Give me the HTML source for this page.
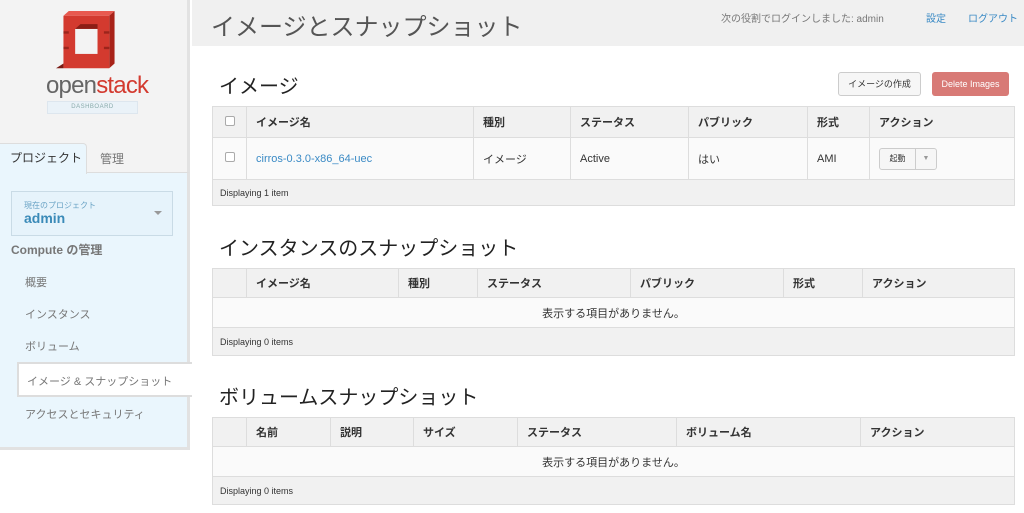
<!DOCTYPE html>
<html><head><meta charset="utf-8"><style>
*{margin:0;padding:0;box-sizing:border-box}
body{width:1024px;height:513px;overflow:hidden;background:#fff;font-family:"Liberation Sans","Noto Sans CJK JP",sans-serif;color:#333;position:relative}
.a{position:absolute}
.sidetop{left:0;top:0;width:190px;height:450px;background:#f3f3f3;border-right:3px solid #e2e2e2}
.nav{left:0;top:172px;width:190px;height:278px;background:#eaf6fd;border-top:1px solid #ddd;border-right:3px solid #e2e2e2;border-bottom:3px solid #e2e2e2}
.hdr{left:192px;top:0;width:832px;height:46px;background:#f0f0f0}
table{position:absolute;left:212px;width:803px;border-collapse:collapse;font-size:11px;border:1px solid #ddd}
th{background:#f1f1f1;text-align:left;font-weight:bold;padding-left:9px;border-right:1px solid #ddd;border-bottom:1px solid #ddd}
td{padding-left:9px;border-right:1px solid #ddd;border-bottom:1px solid #ddd;background:#fafafa}
td.f{background:#f1f1f1;font-size:9px;padding-left:7px}
td.e{text-align:center;padding:0}
h2{position:absolute;left:219px;font-size:20px;font-weight:normal;color:#222}
.cb{display:inline-block;width:10px;height:10px;border:1px solid #aaa;border-radius:2px;background:#fff;margin-left:4px}
.btn{position:absolute;font-size:9px;text-align:center;border-radius:3px}
</style></head><body>
<div class="a sidetop"></div>
<div class="a hdr"></div>
<svg class="a" style="left:56px;top:11px" width="66" height="62" viewBox="0 0 62 52" preserveAspectRatio="none">
<path d="M7 4 L12 0 L55 0 L50 4 Z" fill="#e8594f"/>
<path d="M50 4 L55 0 L55 44 L50 48 Z" fill="#a82218"/>
<path d="M7 4 H50 V48 H7 Z" fill="#d33a2f"/>
<path d="M0 48 L7 44 L7 48 Z" fill="#7a1a13"/>
<rect x="18" y="15" width="21" height="21" fill="#f3f3f3"/>
<path d="M18 15 L23 11 L39 11 L39 15 Z" fill="#8b1e16"/>
<rect x="7" y="17" width="5" height="2" fill="#9c241b"/><rect x="7" y="30" width="5" height="2" fill="#9c241b"/>
<rect x="45" y="17" width="5" height="2" fill="#9c241b"/><rect x="45" y="30" width="5" height="2" fill="#9c241b"/>
</svg>
<div class="a" style="left:46px;top:72px;font-size:24px;letter-spacing:-0.8px;color:#666">open<span style="color:#d33a2f">stack</span></div>
<div class="a" style="left:47px;top:101px;width:91px;height:13px;background:#eaf2f8;border:1px solid #dde6ee;font-size:6px;color:#8aa;text-align:center;line-height:11px;letter-spacing:0.5px">DASHBOARD</div>
<div class="a nav"></div>
<div class="a" style="left:0;top:143px;width:87px;height:31px;background:#eaf6fd;border:1px solid #ddd;border-bottom:none;border-left:none;border-radius:0 4px 0 0;font-size:12px;line-height:29px;padding-left:10px;color:#333">プロジェクト</div>
<div class="a" style="left:100px;top:150px;font-size:12px;color:#777">管理</div>
<div class="a" style="left:11px;top:191px;width:162px;height:45px;border:1px solid #c9dbe6;background:#e6f3fb"></div>
<div class="a" style="left:24px;top:200px;font-size:8px;color:#6aa3c5">現在のプロジェクト</div>
<div class="a" style="left:24px;top:210px;font-size:14px;font-weight:bold;color:#3a8ab8">admin</div>
<div class="a" style="left:154px;top:211px;width:0;height:0;border-left:4px solid transparent;border-right:4px solid transparent;border-top:4px solid #999"></div>
<div class="a" style="left:11px;top:241px;font-size:12px;font-weight:bold;color:#777">Compute の管理</div>
<div class="a" style="left:25px;top:274px;font-size:11px;color:#777">概要</div>
<div class="a" style="left:25px;top:306px;font-size:11px;color:#777">インスタンス</div>
<div class="a" style="left:25px;top:338px;font-size:11px;color:#777">ボリューム</div>
<div class="a" style="left:17px;top:362px;width:175px;height:35px;background:#fff;border:2px solid #ddd;border-right:none"></div>
<div class="a" style="left:27px;top:373px;font-size:11px;color:#777">イメージ &amp; スナップショット</div>
<div class="a" style="left:25px;top:406px;font-size:11px;color:#777">アクセスとセキュリティ</div>
<div class="a" style="left:211px;top:7px;font-size:24px;color:#555">イメージとスナップショット</div>
<div class="a" style="left:721px;top:10px;font-size:10px;color:#777">次の役割でログインしました: admin</div>
<div class="a" style="left:926px;top:10px;font-size:10px;color:#3a8ac5">設定</div>
<div class="a" style="left:968px;top:10px;font-size:10px;color:#3a8ac5">ログアウト</div>
<h2 style="top:70px">イメージ</h2>
<div class="btn" style="left:838px;top:72px;width:83px;height:24px;background:#f6f6f6;border:1px solid #ccc;line-height:22px;color:#333">イメージの作成</div>
<div class="btn" style="left:932px;top:72px;width:77px;height:24px;background:#d87a76;line-height:24px;color:#fff">Delete Images</div>
<table style="top:106px">
<tr style="height:31px"><th style="width:34px;padding-left:9px"><span class="cb" style="margin-left:3px"></span></th><th style="width:227px">イメージ名</th><th style="width:97px">種別</th><th style="width:118px">ステータス</th><th style="width:119px">パブリック</th><th style="width:62px">形式</th><th>アクション</th></tr>
<tr style="height:42px"><td style="padding-left:12px"><span class="cb" style="margin-left:0"></span></td><td style="color:#3a8ac5">cirros-0.3.0-x86_64-uec</td><td>イメージ</td><td>Active</td><td>はい</td><td>AMI</td><td><span style="display:inline-flex;border:1px solid #ccc;border-radius:3px;height:22px;background:#f6f6f6;font-size:8px;line-height:20px"><span style="width:36px;text-align:center;border-right:1px solid #ccc">起動</span><span style="width:20px;text-align:center;color:#999;font-size:7px">▼</span></span></td></tr>
<tr style="height:26px"><td class="f" colspan="7">Displaying 1 item</td></tr>
</table>
<h2 style="top:232px">インスタンスのスナップショット</h2>
<table style="top:268px">
<tr style="height:29px"><th style="width:34px"></th><th style="width:152px">イメージ名</th><th style="width:79px">種別</th><th style="width:153px">ステータス</th><th style="width:153px">パブリック</th><th style="width:79px">形式</th><th>アクション</th></tr>
<tr style="height:30px"><td class="e" colspan="7">表示する項目がありません。</td></tr>
<tr style="height:28px"><td class="f" colspan="7">Displaying 0 items</td></tr>
</table>
<h2 style="top:381px">ボリュームスナップショット</h2>
<table style="top:417px">
<tr style="height:29px"><th style="width:34px"></th><th style="width:84px">名前</th><th style="width:83px">説明</th><th style="width:104px">サイズ</th><th style="width:159px">ステータス</th><th style="width:184px">ボリューム名</th><th>アクション</th></tr>
<tr style="height:30px"><td class="e" colspan="7">表示する項目がありません。</td></tr>
<tr style="height:28px"><td class="f" colspan="7">Displaying 0 items</td></tr>
</table>
</body></html>
